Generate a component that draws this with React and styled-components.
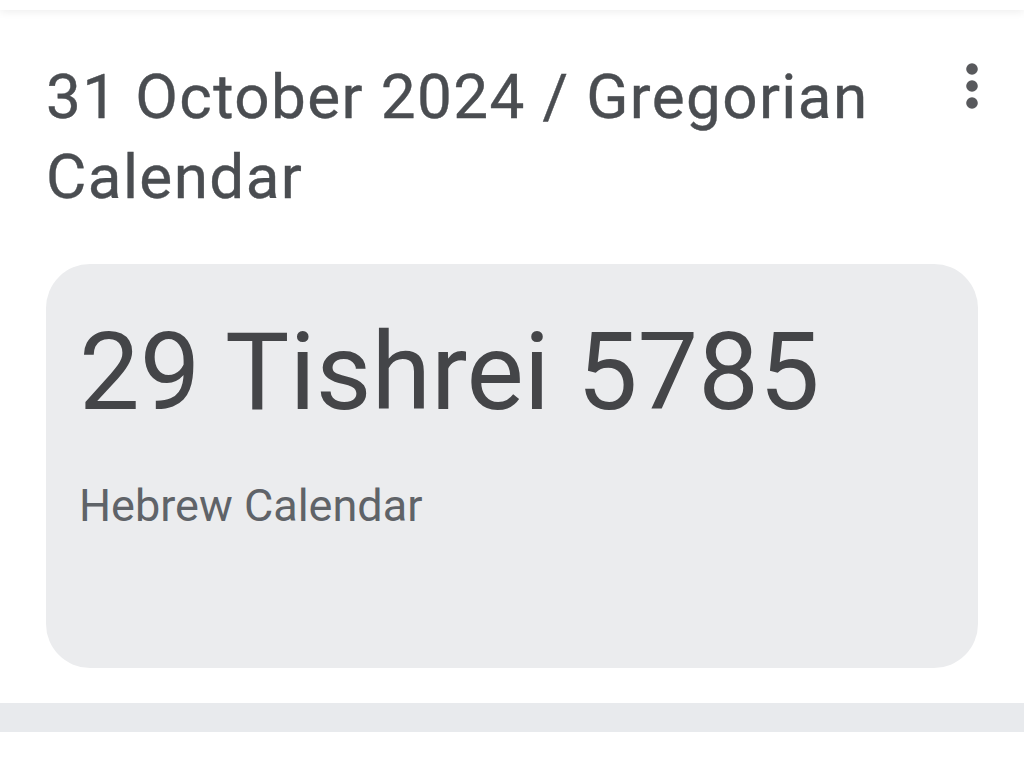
import React from 'react';
import styled, { createGlobalStyle } from 'styled-components';

const GlobalStyle = createGlobalStyle`
  html, body {
    margin: 0;
    padding: 0;
    background: #ffffff;
  }
  body {
    font-family: Roboto, "Liberation Sans", sans-serif;
  }
`;

const Page = styled.div`
  width: 1024px;
  min-height: 768px;
  background: #fff;
  overflow: hidden;
`;

const TopBar = styled.div`
  height: 10px;
  background: #fff;
  box-shadow: 0 2px 8px rgba(0, 0, 0, 0.07);
`;

const Section = styled.section`
  padding: 47px 46px 35px 46px;
`;

const HeaderRow = styled.div`
  display: flex;
  justify-content: space-between;
  align-items: flex-start;
`;

const Title = styled.h1`
  margin: 0;
  font-family: Roboto, "Liberation Sans", sans-serif;
  font-weight: 400;
  font-size: 62px;
  line-height: 80px;
  color: #4a4d51;
  letter-spacing: 1.4px;
  max-width: 860px;
  -webkit-text-stroke: 0.4px #4a4d51;
`;

const MenuButton = styled.button`
  border: none;
  background: transparent;
  padding: 0;
  margin: -5px -28px 0 0;
  width: 68px;
  height: 68px;
  display: flex;
  align-items: center;
  justify-content: center;
  cursor: pointer;
`;

const Card = styled.div`
  margin-top: 47px;
  height: 404px;
  box-sizing: border-box;
  border-radius: 44px;
  background: #ebecee;
  padding: 52px 32px 0 33px;
`;

const BigDate = styled.div`
  font-size: 108px;
  line-height: 112px;
  color: #444548;
  font-weight: 400;
`;

const Caption = styled.div`
  margin-top: 52px;
  font-size: 45px;
  line-height: 52px;
  color: #5f6368;
`;

const Divider = styled.div`
  height: 29px;
  background: #e8eaed;
`;

const MoreIcon = () => (
  <svg width="68" height="68" viewBox="0 0 24 24" fill="#58595c">
    <circle cx="12" cy="6" r="2.05" />
    <circle cx="12" cy="12" r="2.05" />
    <circle cx="12" cy="18" r="2.05" />
  </svg>
);

export default function App() {
  return (
    <Page>
      <GlobalStyle />
      <TopBar />
      <Section>
        <HeaderRow>
          <Title>31 October 2024 / Gregorian Calendar</Title>
          <MenuButton aria-label="More options">
            <MoreIcon />
          </MenuButton>
        </HeaderRow>
        <Card>
          <BigDate>29 Tishrei 5785</BigDate>
          <Caption>Hebrew Calendar</Caption>
        </Card>
      </Section>
      <Divider />
    </Page>
  );
}
